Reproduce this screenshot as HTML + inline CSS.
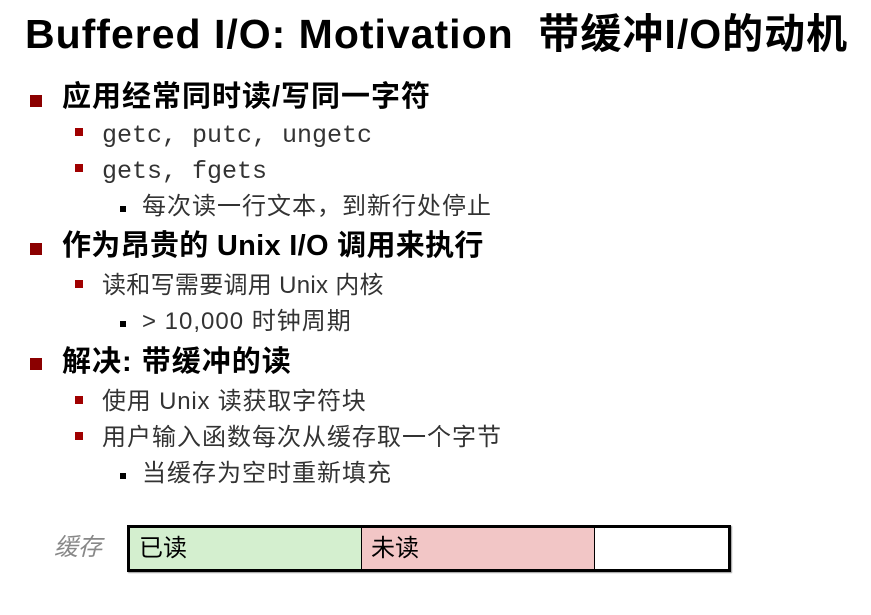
<!DOCTYPE html>
<html><head><meta charset="utf-8"><style>
body{margin:0;width:871px;height:615px;background:#fff;position:relative;overflow:hidden;font-family:"Liberation Sans","Noto Sans CJK SC",sans-serif}
.a{position:absolute;white-space:nowrap;line-height:1}
.t{left:25px;top:14px;font-size:41px;font-weight:bold;color:#000;letter-spacing:1px}
.l1{left:62px;font-size:29px;color:#000;font-weight:bold;letter-spacing:1px}
.l2{left:102px;font-size:24px;color:#333;letter-spacing:0.8px}
.m{font-family:"Liberation Mono",monospace;font-size:25px;letter-spacing:0}
.l3{left:142px;font-size:24px;color:#333;letter-spacing:1px}
.b1{position:absolute;left:30px;width:12px;height:12px;background:#8b0000}
.b2{position:absolute;left:75px;width:8px;height:8px;background:#a00000}
.b3{position:absolute;left:120px;width:6px;height:6px;background:#000}
</style></head><body>
<div class="a t">Buffered I/O: Motivation&nbsp; 带缓冲I/O的动机</div>
<div class="b1" style="top:95px"></div><div class="a l1" style="top:83px">应用经常同时读/写同一字符</div>
<div class="b2" style="top:128px"></div><div class="a l2 m" style="top:123px">getc, putc, ungetc</div>
<div class="b2" style="top:164px"></div><div class="a l2 m" style="top:159px">gets, fgets</div>
<div class="b3" style="top:206px"></div><div class="a l3" style="top:195px">每次读一行文本，到新行处停止</div>
<div class="b1" style="top:243px"></div><div class="a l1" style="top:232px;letter-spacing:0.3px">作为昂贵的 Unix I/O 调用来执行</div>
<div class="b2" style="top:280px"></div><div class="a l2" style="top:274px;letter-spacing:0.3px">读和写需要调用 Unix 内核</div>
<div class="b3" style="top:321px"></div><div class="a l3" style="top:310px">&gt; 10,000 时钟周期</div>
<div class="b1" style="top:358px"></div><div class="a l1" style="top:348px">解决: 带缓冲的读</div>
<div class="b2" style="top:396px"></div><div class="a l2" style="top:390px">使用 Unix 读获取字符块</div>
<div class="b2" style="top:432px"></div><div class="a l2" style="top:426px;letter-spacing:1px">用户输入函数每次从缓存取一个字节</div>
<div class="b3" style="top:473px"></div><div class="a l3" style="top:462px">当缓存为空时重新填充</div>
<div class="a" style="left:54px;top:536px;font-size:24px;color:#888;font-style:italic">缓存</div>
<div style="position:absolute;left:127px;top:525px;width:598px;height:41px;border:3px solid #000;display:flex;box-shadow:1px 1px 1px #999">
<div style="width:232px;background:#d4efcf;border-right:1px solid #000;font-size:24px;line-height:1;padding:9px 0 0 9px;box-sizing:border-box">已读</div>
<div style="width:233px;background:#f2c6c6;border-right:1px solid #000;font-size:24px;line-height:1;padding:9px 0 0 9px;box-sizing:border-box">未读</div>
<div style="flex:1;background:#fff"></div>
</div>
</body></html>
